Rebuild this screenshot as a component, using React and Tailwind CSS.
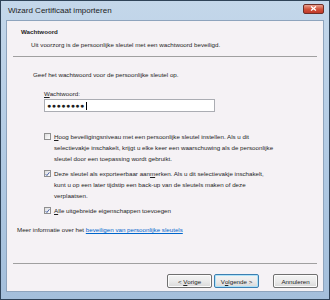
import React from "react";

const font = { fontFamily: '"Liberation Sans", Arial, sans-serif' };

function Check({ checked }) {
  return (
    <span className="mt-[2px] flex h-[7px] w-[7px] shrink-0 items-center justify-center border border-[#8f8f8f] bg-gradient-to-br from-[#dcdcdc] to-[#ffffff]">
      {checked && (
        <svg width="6" height="6" viewBox="0 0 6 6">
          <path d="M0.8 3.2 L2.3 4.8 L5.3 0.9" fill="none" stroke="#3a55a0" strokeWidth="1.1" />
        </svg>
      )}
    </span>
  );
}

function Btn({ children, focused }) {
  return (
    <div
      className={
        "flex h-[14px] w-[45px] items-center justify-center whitespace-pre rounded-[2px] border text-[#222] bg-gradient-to-b from-[#f4f4f4] via-[#ebebeb] to-[#d9d9d9] " +
        (focused ? "border-[#3c7fb1] shadow-[inset_0_0_0_1px_#aee3f9]" : "border-[#707070] shadow-[inset_0_0_0_1px_#fcfcfc]")
      }
    >
      {children}
    </div>
  );
}

export default function App() {
  return (
    <div
      className="flex h-[300px] w-[330px] flex-col border border-[#2f4358] bg-gradient-to-b from-[#c4d7ea] via-[#b2cbe4] to-[#a4bfdb] text-[6.2px] leading-[11px] text-[#1e1e1e]"
      style={font}
    >
      <div className="flex h-[19px] shrink-0 items-center justify-between pl-[7px] pr-[5px]">
        <span className="text-[8px] text-[#1c1c1c]">Wizard Certificaat importeren</span>
        <div className="-mt-[4px] flex h-[10px] w-[21px] items-center justify-center rounded-[2px] border border-[#6e2e27] bg-gradient-to-b from-[#e8a08f] via-[#d2533b] to-[#c0392a]">
          <svg width="7" height="5" viewBox="0 0 7 5">
            <path d="M1 0.5 L6 4.5 M6 0.5 L1 4.5" stroke="white" strokeWidth="1.3" />
          </svg>
        </div>
      </div>
      <div className="mx-[5px] mb-[7px] flex flex-1 flex-col border border-[#8ea4bd] bg-[#f5f2f5]">
        <div className="pl-[14px] pt-[5px]">
          <div className="font-bold">Wachtwoord</div>
          <div className="pl-[10px] pt-[2px]">Uit voorzorg is de persoonlijke sleutel met een wachtwoord beveiligd.</div>
        </div>
        <div className="mx-[6px] mt-[6px] h-[2px] border-t border-[#a0a0a0] border-b-white" />
        <div className="flex flex-col pl-[26px] pt-[11px]">
          <div>Geef het wachtwoord voor de persoonlijke sleutel op.</div>
          <div className="pl-[11px] pt-[8px]">
            <span className="underline">W</span>achtwoord:
          </div>
          <div className="ml-[11px] flex h-[13px] w-[171px] items-center border border-[#abadb3] bg-white pl-[2px] text-[7px] tracking-[0.5px]">
            ●●●●●●●●<span className="ml-[1px] h-[8px] w-[1px] bg-black" />
          </div>
          <div className="flex flex-col gap-[4px] pl-[11px] pt-[19px]">
            <div className="flex gap-[3px]">
              <Check />
              <div className="whitespace-nowrap">
                <span className="underline">H</span>oog beveiligingsniveau met een persoonlijke sleutel instellen. Als u dit
                <br />
                selectievakje inschakelt, krijgt u elke keer een waarschuwing als de persoonlijke
                <br />
                sleutel door een toepassing wordt gebruikt.
              </div>
            </div>
            <div className="flex gap-[3px]">
              <Check checked />
              <div className="whitespace-nowrap">
                Deze sleutel als exporteerbaar aan<span className="underline">m</span>erken. Als u dit selectievakje inschakelt,
                <br />
                kunt u op een later tijdstip een back-up van de sleutels maken of deze
                <br />
                verplaatsen.
              </div>
            </div>
            <div className="flex gap-[3px]">
              <Check checked />
              <div>
                <span className="underline">A</span>lle uitgebreide eigenschappen toevoegen
              </div>
            </div>
          </div>
        </div>
        <div className="pl-[10px] pt-[8px]">
          Meer informatie over het{" "}
          <span className="text-[#0066cc] underline">beveiligen van persoonlijke sleutels</span>
        </div>
        <div className="flex-1" />
        <div className="mx-[6px] h-[2px] border-t border-[#a0a0a0] border-b-white" />
        <div className="flex justify-end gap-[2px] px-[5px] pb-[3px] pt-[9px]">
          <Btn>
            <span>{"< "}</span>
            <span className="underline">V</span>
            <span>orige</span>
          </Btn>
          <Btn focused>
            <span>V</span>
            <span className="underline">o</span>
            <span>{"lgende >"}</span>
          </Btn>
          <div className="w-[10px]" />
          <Btn>Annuleren</Btn>
        </div>
      </div>
    </div>
  );
}
